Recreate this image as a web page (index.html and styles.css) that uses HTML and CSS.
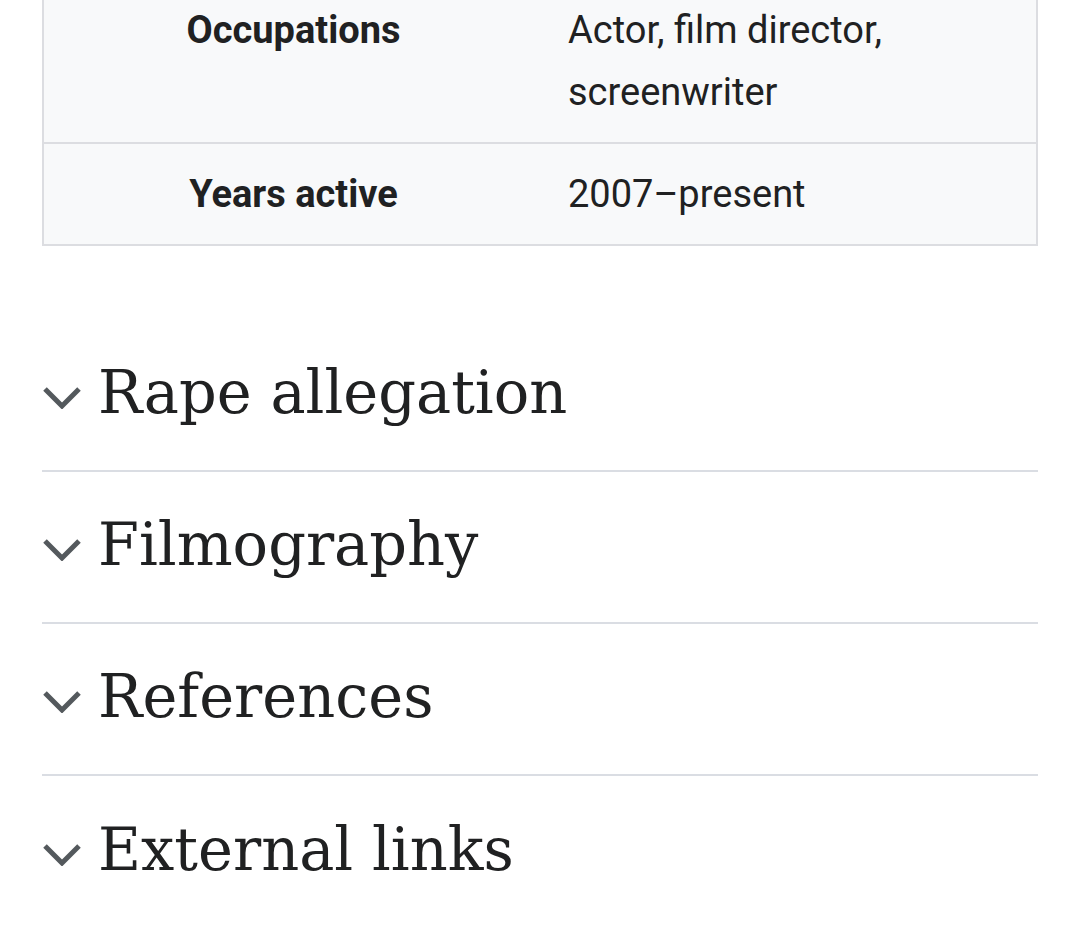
FILE: index.html
```html
<!DOCTYPE html>
<html lang="en">
<head>
<meta charset="utf-8">
<title>Article</title>
<link rel="stylesheet" href="styles.css">
</head>
<body>
<main class="content">
  <table class="infobox">
    <tbody>
      <tr>
        <th class="infobox-label">Occupations</th>
        <td class="infobox-data">Actor, film director,<br>screenwriter</td>
      </tr>
      <tr>
        <th class="infobox-label">Years active</th>
        <td class="infobox-data">2007–present</td>
      </tr>
    </tbody>
  </table>

  <div class="sections">
    <div class="section-heading">
      <svg class="chevron" viewBox="0 0 40 24" aria-hidden="true"><polyline points="3,4 20,21 37,4"/></svg>
      <h2>Rape allegation</h2>
    </div>
    <div class="section-heading">
      <svg class="chevron" viewBox="0 0 40 24" aria-hidden="true"><polyline points="3,4 20,21 37,4"/></svg>
      <h2>Filmography</h2>
    </div>
    <div class="section-heading">
      <svg class="chevron" viewBox="0 0 40 24" aria-hidden="true"><polyline points="3,4 20,21 37,4"/></svg>
      <h2>References</h2>
    </div>
    <div class="section-heading">
      <svg class="chevron" viewBox="0 0 40 24" aria-hidden="true"><polyline points="3,4 20,21 37,4"/></svg>
      <h2>External links</h2>
    </div>
  </div>
</main>
</body>
</html>
```

FILE: styles.css
```css
html, body {
  margin: 0;
  padding: 0;
  background: #ffffff;
}

body {
  font-family: Roboto, "Liberation Sans", sans-serif;
  color: #202122;
  overflow: hidden;
}

.content {
  padding: 0 42px;
}

/* Infobox */
.infobox {
  width: 996px;
  margin-top: -22px;
  border-collapse: collapse;
  border: 2px solid #dcdde1;
  background: #f8f9fa;
  font-size: 38px;
  line-height: 62px;
}

.infobox tr + tr {
  border-top: 2px solid #dcdde1;
}

.infobox-label {
  width: 500px;
  box-sizing: border-box;
  padding: 19px 10px;
  text-align: center;
  vertical-align: top;
  font-weight: 700;
}

.infobox-data {
  padding: 19px 25px 19px 25px;
  text-align: left;
  vertical-align: top;
  font-weight: 400;
}

/* Collapsible section headings */
.sections {
  margin-top: 74px;
}

.section-heading {
  display: flex;
  align-items: center;
  height: 152px;
  padding-bottom: 4px;
  box-sizing: border-box;
  border-bottom: 2px solid #dadde3;
}

.section-heading:last-child {
  border-bottom: none;
}

.chevron {
  width: 40px;
  height: 24px;
  flex: none;
  margin-right: 16px;
  margin-top: 8px;
  fill: none;
  stroke: #54595d;
  stroke-width: 5;
}

.section-heading h2 {
  margin: 0;
  font-family: "DejaVu Serif", "Liberation Serif", serif;
  font-weight: 400;
  font-size: 59px;
  line-height: 1.2;
  color: #202122;
}
```
